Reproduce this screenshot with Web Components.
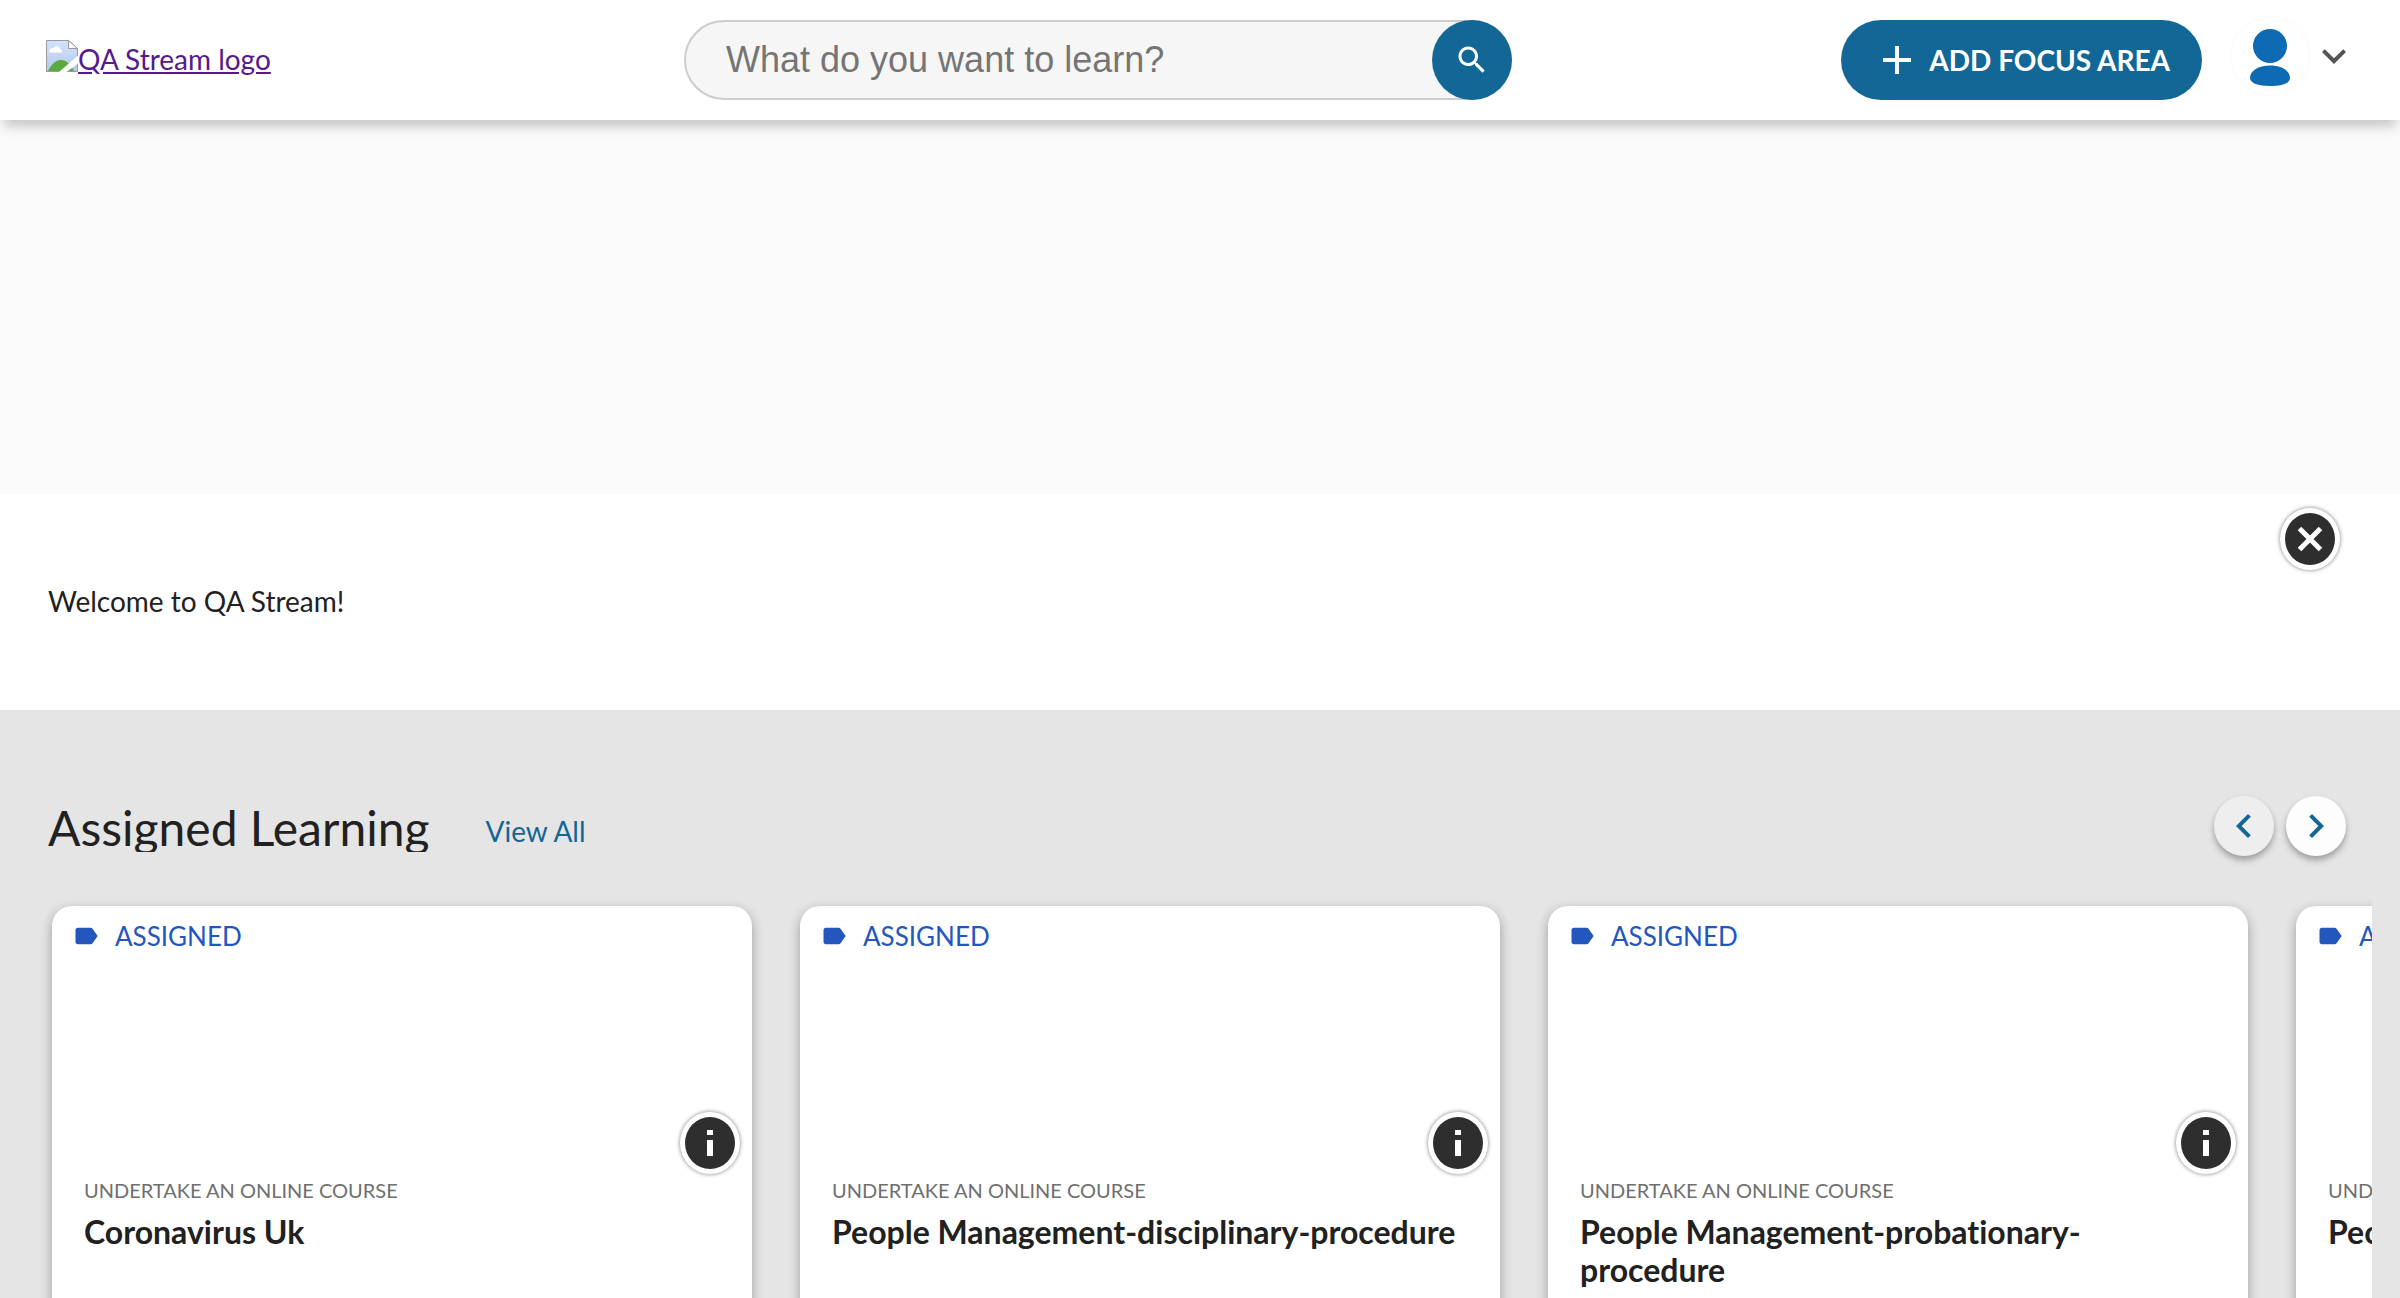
<!DOCTYPE html>
<html lang="en">
<head>
<meta charset="utf-8">
<title>QA Stream</title>
<style>
  html, body { margin: 0; height: 100%; }
  body { font-family: Lato, "Liberation Sans", sans-serif; font-size: 28px; line-height: 34px; font-variant-ligatures: none; color: #212121; background: #fafafa; }
</style>
</head>
<body>
<stream-app></stream-app>

<template id="t-app">
  <style>
    :host { display: block; height: 100vh; overflow: hidden; }
    .focus { height: 374px; background: #fafafa; }
  </style>
  <stream-header></stream-header>
  <main>
    <div class="focus"></div>
    <welcome-banner>Welcome to QA Stream!</welcome-banner>
    <learning-shelf>
      <span slot="title">Assigned Learning</span>
      <course-card kind="Undertake an online course">Coronavirus Uk</course-card>
      <course-card kind="Undertake an online course">People Management-disciplinary-procedure</course-card>
      <course-card kind="Undertake an online course">People Management-probationary-procedure</course-card>
      <course-card kind="Undertake an online course">People Management</course-card>
    </learning-shelf>
  </main>
</template>

<template id="t-header">
  <style>
    :host { display: grid; grid-template-columns: 638fr 828fr 846fr; align-items: center; height: 120px; box-sizing: border-box; padding: 0 42px 0 46px; background: #fff; position: relative; z-index: 1; box-shadow: 0 10px 12px -4px rgba(0,0,0,.22); }
    .logo { display: inline-flex; align-items: flex-start; justify-self: start; padding-bottom: 4px; color: #551a8b; text-decoration: none; }
    .logo span { text-decoration: underline; padding-top: 2px; }
    svg { display: block; }
    .actions { display: flex; justify-content: flex-end; align-items: center; }
    .add { display: flex; align-items: center; gap: 8px; height: 80px; margin-right: 28px; padding: 0 32px; border: 0; border-radius: 40px; background: #136796; color: #fff; font: 700 28px/34px Lato, sans-serif; text-transform: uppercase; white-space: nowrap; }
    .user { display: flex; align-items: center; padding: 0 0 8px; border: 0; background: none; }
  </style>
  <a class="logo" href="#">
    <svg width="32" height="32" viewBox="0 0 32 32" aria-hidden="true">
      <defs><linearGradient id="sky" x2="0" y2="1"><stop stop-color="#d3e3fc"/><stop offset="1" stop-color="#b3c8ea"/></linearGradient></defs>
      <path d="M.5.5H22.500l9 8V31.500H.5z" fill="url(#sky)" stroke="#9a9a9a"/>
      <path d="M2 31C6 23 11 20 15 20s9 3 13 11z" fill="#5aaa3e"/>
      <path d="M4 12.500c-2-3 1-5 3.500-4C9 5 13.500 5.500 14 9c2 .5 2.500 2.500 1.500 3.500z" fill="#fff"/>
      <path d="M32 15.500V23.500L20.500 32H13z" fill="#fff"/>
      <path d="M22.500.5v8h9z" fill="#fff" stroke="#9a9a9a"/>
    </svg>
    <span>QA Stream logo</span>
  </a>
  <search-box></search-box>
  <div class="actions">
    <button class="add" type="button">
      <svg width="48" height="48" viewBox="0 0 24 24" fill="#fff" aria-hidden="true"><path d="M19 13h-6v6h-2v-6H5v-2h6V5h2v6h6v2z"/></svg>
      Add focus area
    </button>
    <button class="user" type="button" aria-label="Account">
      <svg width="80" height="80" viewBox="0 0 80 80" aria-hidden="true">
        <circle cx="40" cy="40" r="39.500" fill="#fff" stroke="#fafafa"/>
        <ellipse cx="40" cy="30" rx="17" ry="17" fill="#0e6ab3"/>
        <path d="M20 62C20 55 28 49.500 40 49.500S60 55 60 62C60 67 52 70 40 70S20 67 20 62z" fill="#0e6ab3"/>
      </svg>
      <svg width="48" height="48" viewBox="0 0 24 24" fill="#555" aria-hidden="true"><path d="M16.590 8.590L12 13.170 7.410 8.590 6 10l6 6 6-6z"/></svg>
    </button>
  </div>
</template>

<template id="t-search">
  <style>
    :host { display: block; }
    form { display: flex; box-sizing: border-box; height: 80px; border: 2px solid #ccc; border-radius: 40px; background: #f6f6f6; }
    input { flex: 1; min-width: 0; padding: 0 0 0 40px; border: 0; outline: 0; background: none; color: #212121; font: 36px/42px "Liberation Sans", Arial, sans-serif; }
    input::placeholder { color: #757575; opacity: 1; }
    button { display: grid; place-items: center; width: 80px; height: 80px; margin: -2px; padding: 0; border: 0; border-radius: 50%; background: #136796; }
  </style>
  <form role="search">
    <input type="text" aria-label="Search" placeholder="What do you want to learn?">
    <button type="button" aria-label="Search">
      <svg width="36" height="36" viewBox="0 0 24 24" fill="#fff" aria-hidden="true"><path d="M15.500 14h-.79l-.28-.27C15.410 12.590 16 11.110 16 9.500 16 5.910 13.090 3 9.500 3S3 5.910 3 9.500 5.910 16 9.500 16c1.610 0 3.090-.59 4.230-1.570l.27.28v.79l5 4.990L20.490 19l-4.990-5zm-6 0C7.010 14 5 11.990 5 9.500S7.010 5 9.500 5 14 7.010 14 9.500 11.990 14 9.500 14z"/></svg>
    </button>
  </form>
</template>

<template id="t-round">
  <style>
    :host { display: block; }
    button { display: grid; place-items: center; box-sizing: border-box; width: 60px; height: 62px; padding: 0; border: 5px solid #fff; border-radius: 50%; background: #2e2e2e; box-shadow: 0 0 4px rgba(0,0,0,.5); }
  </style>
  <button type="button"><svg width="30" height="30" viewBox="0 0 30 30" aria-hidden="true"></svg></button>
</template>

<template id="t-welcome">
  <style>
    :host { display: flex; flex-direction: column; gap: 14px; padding: 14px 60px 92px 48px; background: #fff; }
    round-button { align-self: flex-end; }
    p { margin: 0; }
  </style>
  <round-button icon="close"></round-button>
  <p><slot></slot></p>
</template>

<template id="t-shelf">
  <style>
    :host { display: block; padding: 86px 28px 60px; background: #e5e5e5; }
    .head { display: flex; justify-content: space-between; padding: 0 26px 0 20px; }
    .title { display: flex; align-items: flex-end; gap: 56px; padding-bottom: 4px; }
    h2 { margin: 0; font-weight: 400; font-size: 48px; line-height: 48px; overflow: hidden; white-space: nowrap; }
    a { padding-bottom: 4px; color: #136796; text-decoration: none; }
    .nav { display: flex; gap: 12px; }
    .nav button { display: grid; place-items: center; width: 60px; height: 60px; padding: 0; border: 0; border-radius: 50%; background: #fdfdfd; box-shadow: 0 4px 6px rgba(0,0,0,.32); }
    .nav button.off { background: #eee; }
    .rail { display: flex; gap: 48px; margin-top: 34px; padding: 16px 0 20px 24px; overflow: hidden; }
  </style>
  <div class="head">
    <div class="title"><h2><slot name="title"></slot></h2><a href="#">View All</a></div>
    <div class="nav">
      <button class="off" type="button" aria-label="Previous"><svg width="48" height="48" viewBox="0 0 24 24" fill="#136796" aria-hidden="true"><path d="M15.410 7.410L14 6l-6 6 6 6 1.410-1.410L10.830 12z"/></svg></button>
      <button type="button" aria-label="Next"><svg width="48" height="48" viewBox="0 0 24 24" fill="#136796" aria-hidden="true"><path d="M10 6L8.590 7.410 13.170 12l-4.580 4.590L10 18l6-6z"/></svg></button>
    </div>
  </div>
  <div class="rail"><slot></slot></div>
</template>

<template id="t-card">
  <style>
    :host { display: block; flex: none; width: 700px; min-height: 440px; border-radius: 20px; background: #fff; box-shadow: 0 4px 12px rgba(0,0,0,.32); }
    .tag { display: flex; align-items: center; gap: 15px; padding: 14px 20px 0; color: #2457bd; font-size: 26px; line-height: 32px; text-transform: uppercase; }
    .media { display: flex; align-items: flex-end; justify-content: flex-end; box-sizing: border-box; height: 226px; padding: 0 12px 4px; }
    .body { padding: 0 32px; }
    .kind { margin: 0 0 11px; color: #6f6f6f; font-size: 20px; line-height: 24px; text-transform: uppercase; }
    h3 { margin: 0; font-weight: 700; font-size: 32px; line-height: 38px; }
  </style>
  <div class="tag"><svg width="28" height="28" viewBox="0 0 24 24" fill="currentColor" aria-hidden="true"><path d="M17.630 5.840C17.270 5.330 16.670 5 16 5L5 5.010C3.900 5.010 3 5.900 3 7v10c0 1.100.9 1.990 2 1.990L16 19c.67 0 1.270-.33 1.630-.84L22 12z"/></svg><span>Assigned</span></div>
  <div class="media"><round-button icon="info"></round-button></div>
  <div class="body"><p class="kind"></p><h3><slot></slot></h3></div>
</template>

<script>
  class Base extends HTMLElement {
    constructor() {
      super();
      const id = this.constructor.template;
      this.attachShadow({ mode: "open" }).append(document.getElementById(id).content.cloneNode(true));
    }
  }
  const ICONS = {
    close: ["Close", '<path d="M4.500 4.500L25.500 25.500M25.500 4.500L4.500 25.500" stroke="#fff" stroke-width="5" fill="none"/>'],
    info: ["More information", '<path d="M12 2h6v5h-6zM12 12h6v16h-6z" fill="#fff"/>']
  };
  customElements.define("round-button", class extends Base {
    static template = "t-round";
    connectedCallback() {
      const [label, shape] = ICONS[this.getAttribute("icon")];
      this.shadowRoot.querySelector("button").setAttribute("aria-label", label);
      this.shadowRoot.querySelector("svg").innerHTML = shape;
    }
  });
  customElements.define("search-box", class extends Base { static template = "t-search"; });
  customElements.define("stream-header", class extends Base { static template = "t-header"; });
  customElements.define("welcome-banner", class extends Base { static template = "t-welcome"; });
  customElements.define("course-card", class extends Base {
    static template = "t-card";
    connectedCallback() {
      this.shadowRoot.querySelector(".kind").textContent = this.getAttribute("kind");
    }
  });
  customElements.define("learning-shelf", class extends Base { static template = "t-shelf"; });
  customElements.define("stream-app", class extends Base { static template = "t-app"; });
</script>
</body>
</html>
